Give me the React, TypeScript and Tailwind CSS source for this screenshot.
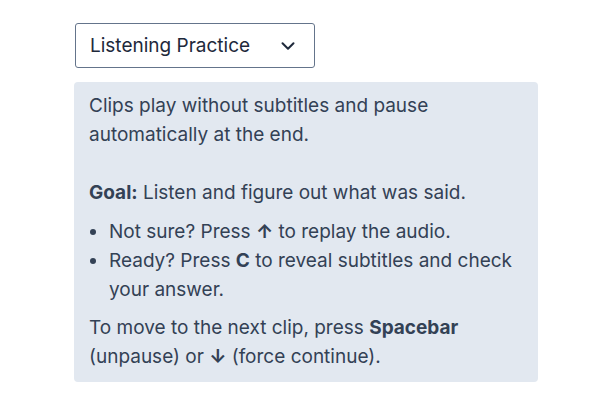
import { ChevronDown } from "lucide-react";

export default function App() {
    return (
        <div className="min-h-screen bg-white font-['Inter',sans-serif]">
            <div className="pt-[23px] pl-[74px] w-[538px]">
                {/* Mode select */}
                <div className="ml-px w-[240px] h-[45px] border border-[#64748b] rounded-[3px] flex items-center justify-between pl-[14px] pr-[15px] pt-px text-[19px] text-[#1e293b]">
                    <span>Listening Practice</span>
                    <ChevronDown className="w-[22px] h-[22px]" strokeWidth={2.2} />
                </div>

                {/* Instructions */}
                <div className="mt-[14px] bg-[#e2e8f0] rounded-[4px] px-[15px] pt-[9px] pb-[11px] text-[19px] leading-[29px] text-[#334155]">
                    <p>
                        Clips play without subtitles and pause automatically at the end.
                        <br />
                        <br />
                        <b className="font-bold">Goal:</b> Listen and figure out what was said.
                    </p>
                    <ul className="list-disc pl-[20px] mt-[10px]">
                        <li>Not sure? Press <b className="font-bold">↑</b> to replay the audio.</li>
                        <li>Ready? Press <b className="font-bold">C</b> to reveal subtitles and check your answer.</li>
                    </ul>
                    <p className="mt-[9px]">
                        To move to the next clip, press <b className="font-bold">Spacebar</b> (unpause) or{" "}
                        <b className="font-bold">↓</b> (force continue).
                    </p>
                </div>
            </div>
        </div>
    );
}
